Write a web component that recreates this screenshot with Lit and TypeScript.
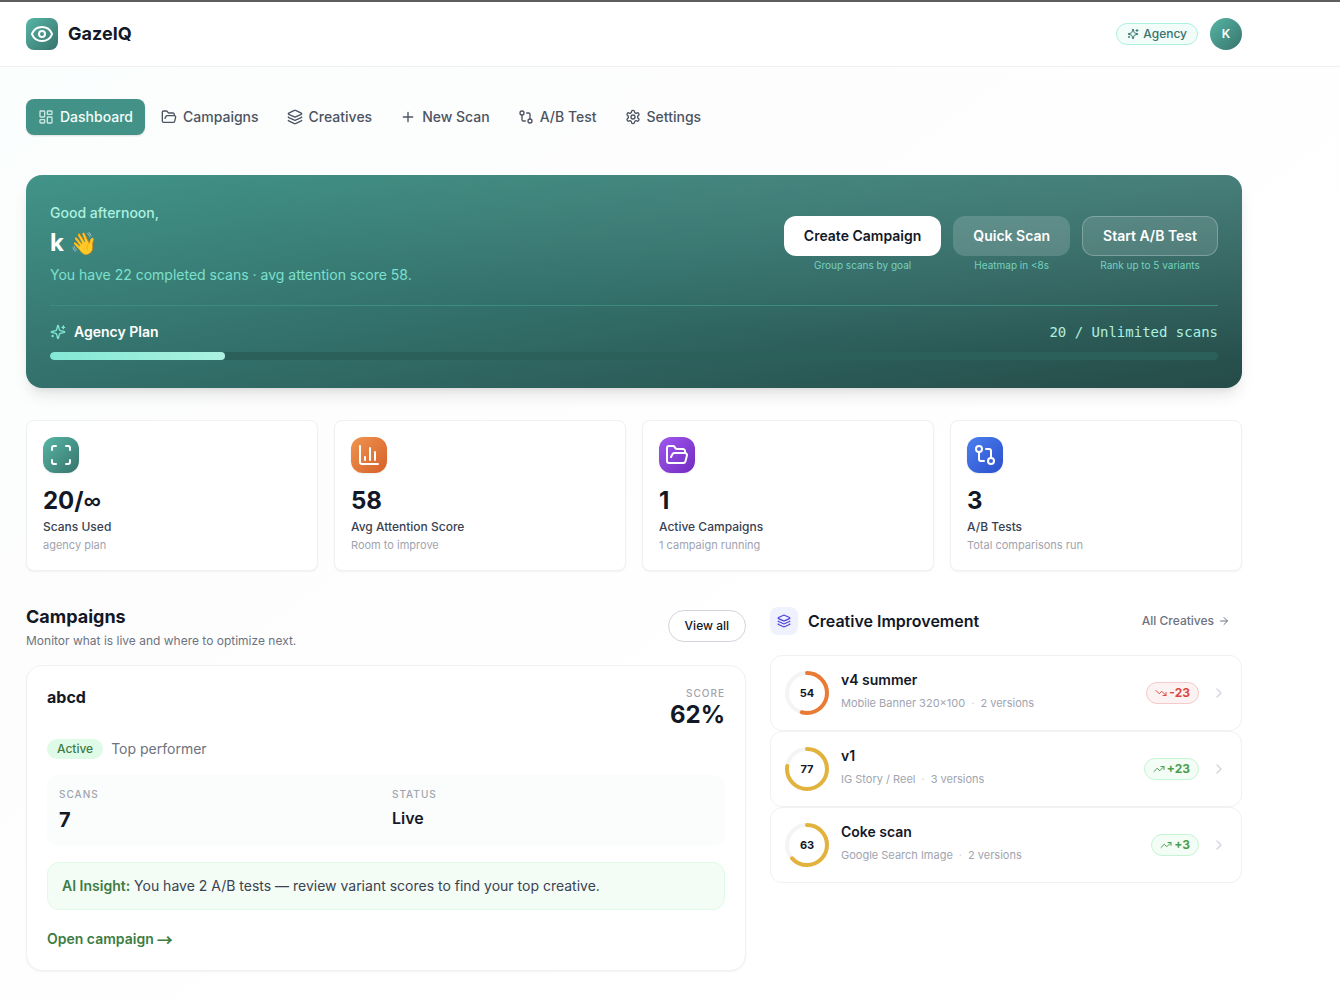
import { LitElement, html, svg, css, type SVGTemplateResult } from "lit";
import { customElement } from "lit/decorators.js";
import { styleMap } from "lit/directives/style-map.js";

const icons: Record<string, SVGTemplateResult> = {
  eye: svg`<path d="M2.062 12.348a1 1 0 0 1 0-.696 10.75 10.75 0 0 1 19.876 0 1 1 0 0 1 0 .696 10.75 10.75 0 0 1-19.876 0"/><circle cx="12" cy="12" r="3"/>`,
  dashboard: svg`<rect x="3" y="3" width="7" height="9" rx="1"/><rect x="14" y="3" width="7" height="5" rx="1"/><rect x="14" y="12" width="7" height="9" rx="1"/><rect x="3" y="16" width="7" height="5" rx="1"/>`,
  folder: svg`<path d="m6 14 1.5-2.9A2 2 0 0 1 9.24 10H20a2 2 0 0 1 1.94 2.5l-1.54 6a2 2 0 0 1-1.95 1.5H4a2 2 0 0 1-2-2V5a2 2 0 0 1 2-2h3.9a2 2 0 0 1 1.69.9l.81 1.2a2 2 0 0 0 1.67.9H18a2 2 0 0 1 2 2v2"/>`,
  layers: svg`<path d="M12.83 2.18a2 2 0 0 0-1.66 0L2.6 6.08a1 1 0 0 0 0 1.83l8.58 3.91a2 2 0 0 0 1.66 0l8.58-3.9a1 1 0 0 0 0-1.83z"/><path d="M2 12a1 1 0 0 0 .58.91l8.6 3.91a2 2 0 0 0 1.65 0l8.58-3.9A1 1 0 0 0 22 12"/><path d="M2 17a1 1 0 0 0 .58.91l8.6 3.91a2 2 0 0 0 1.65 0l8.58-3.9A1 1 0 0 0 22 17"/>`,
  plus: svg`<path d="M5 12h14M12 5v14"/>`,
  compare: svg`<circle cx="18" cy="18" r="3"/><circle cx="6" cy="6" r="3"/><path d="M13 6h3a2 2 0 0 1 2 2v7"/><path d="M11 18H8a2 2 0 0 1-2-2V9"/>`,
  settings: svg`<path d="M12.22 2h-.44a2 2 0 0 0-2 2v.18a2 2 0 0 1-1 1.73l-.43.25a2 2 0 0 1-2 0l-.15-.08a2 2 0 0 0-2.73.73l-.22.38a2 2 0 0 0 .73 2.73l.15.1a2 2 0 0 1 1 1.72v.51a2 2 0 0 1-1 1.74l-.15.09a2 2 0 0 0-.73 2.73l.22.38a2 2 0 0 0 2.73.73l.15-.08a2 2 0 0 1 2 0l.43.25a2 2 0 0 1 1 1.73V20a2 2 0 0 0 2 2h.44a2 2 0 0 0 2-2v-.18a2 2 0 0 1 1-1.73l.43-.25a2 2 0 0 1 2 0l.15.08a2 2 0 0 0 2.73-.73l.22-.39a2 2 0 0 0-.73-2.73l-.15-.08a2 2 0 0 1-1-1.74v-.5a2 2 0 0 1 1-1.74l.15-.09a2 2 0 0 0 .73-2.73l-.22-.38a2 2 0 0 0-2.73-.73l-.15.08a2 2 0 0 1-2 0l-.43-.25a2 2 0 0 1-1-1.73V4a2 2 0 0 0-2-2z"/><circle cx="12" cy="12" r="3"/>`,
  sparkles: svg`<path d="M9.937 15.5A2 2 0 0 0 8.5 14.063l-6.135-1.582a.5.5 0 0 1 0-.962L8.5 9.936A2 2 0 0 0 9.937 8.5l1.582-6.135a.5.5 0 0 1 .963 0L14.063 8.5A2 2 0 0 0 15.5 9.937l6.135 1.581a.5.5 0 0 1 0 .964L15.5 14.063a2 2 0 0 0-1.437 1.437l-1.582 6.135a.5.5 0 0 1-.963 0z"/><path d="M20 3v4M22 5h-4M4 17v2M5 18H3"/>`,
  scan: svg`<path d="M3 7V5a2 2 0 0 1 2-2h2M17 3h2a2 2 0 0 1 2 2v2M21 17v2a2 2 0 0 1-2 2h-2M7 21H5a2 2 0 0 1-2-2v-2"/>`,
  chart: svg`<path d="M3 3v16a2 2 0 0 0 2 2h16M18 17V9M13 17V5M8 17v-3"/>`,
  down: svg`<path d="m22 17-8.5-8.5-5 5L2 7"/><path d="M16 17h6v-6"/>`,
  up: svg`<path d="m22 7-8.5 8.5-5-5L2 17"/><path d="M16 7h6v6"/>`,
  arrow: svg`<path d="M5 12h14M12 5l7 7-7 7"/>`,
  chevron: svg`<path d="m9 18 6-6-6-6"/>`,
};

const icon = (name: string, size = 16) => html`<svg
  class="icon"
  width=${size}
  height=${size}
  viewBox="0 0 24 24"
  aria-hidden="true"
>${icons[name]}</svg>`;

const navItems = [
  { label: "Dashboard", icon: "dashboard", active: true },
  { label: "Campaigns", icon: "folder" },
  { label: "Creatives", icon: "layers" },
  { label: "New Scan", icon: "plus" },
  { label: "A/B Test", icon: "compare" },
  { label: "Settings", icon: "settings" },
];

const actions = [
  { label: "Create Campaign", hint: "Group scans by goal", kind: "solid" },
  { label: "Quick Scan", hint: "Heatmap in <8s", kind: "soft" },
  { label: "Start A/B Test", hint: "Rank up to 5 variants", kind: "outline" },
];

const stats = [
  {
    icon: "scan",
    tone: "teal",
    value: html`20/<span class="infinity">∞</span>`,
    label: "Scans Used",
    note: "agency plan",
  },
  { icon: "chart", tone: "orange", value: "58", label: "Avg Attention Score", note: "Room to improve" },
  { icon: "folder", tone: "purple", value: "1", label: "Active Campaigns", note: "1 campaign running" },
  { icon: "compare", tone: "blue", value: "3", label: "A/B Tests", note: "Total comparisons run" },
];

const creatives = [
  { name: "v4 summer", format: "Mobile Banner 320×100", versions: 2, score: 54, delta: -23 },
  { name: "v1", format: "IG Story / Reel", versions: 3, score: 77, delta: 23 },
  { name: "Coke scan", format: "Google Search Image", versions: 2, score: 63, delta: 3 },
];

@customElement("app-root")
export class AppRoot extends LitElement {
  static styles = css`
    :host {
      display: block;
      min-height: 100vh;
      box-sizing: border-box;
      border-top: 2px solid #5f5d5e;
      background: linear-gradient(to bottom right, #fafefd, #fdfdfd 30%, #ffffff 70%);
      color: #131827;
      font-family: Inter, "Liberation Sans", sans-serif;
      font-size: 14px;
      line-height: 20px;
    }
    *,
    *::before,
    *::after {
      box-sizing: border-box;
    }
    h1, h2, h3, p, ul {
      margin: 0;
      padding: 0;
      list-style: none;
    }
    a {
      color: inherit;
      text-decoration: none;
    }
    button {
      font: inherit;
      color: inherit;
      cursor: pointer;
      margin: 0;
    }
    .icon {
      display: block;
      flex: none;
      fill: none;
      stroke: currentColor;
      stroke-width: 2;
      stroke-linecap: round;
      stroke-linejoin: round;
    }

    .topbar {
      display: flex;
      align-items: center;
      justify-content: space-between;
      height: 65px;
      padding: 0 98px 0 26px;
      background: #ffffff;
      border-bottom: 1px solid #eef0f2;
    }
    .brand {
      display: flex;
      align-items: center;
      gap: 10px;
      font-size: 18px;
      font-weight: 700;
      line-height: 28px;
    }
    .brand-mark {
      display: grid;
      place-items: center;
      width: 32px;
      height: 32px;
      border-radius: 8px;
      color: #ffffff;
      background: linear-gradient(to bottom right, #57b6a5, #37736d);
    }
    .account {
      display: flex;
      align-items: center;
      gap: 12px;
    }
    .plan-pill {
      display: flex;
      align-items: center;
      gap: 4px;
      height: 22px;
      padding: 0 10px;
      border: 1px solid #acf1e0;
      border-radius: 11px;
      background: #f2fdfa;
      color: #37736d;
      font-size: 12px;
      font-weight: 500;
      line-height: 16px;
    }
    .avatar {
      width: 32px;
      height: 32px;
      padding: 0;
      border: 0;
      border-radius: 50%;
      background: linear-gradient(to bottom right, #57b6a5, #37736d);
      color: #ffffff;
      font-size: 12px;
      font-weight: 600;
    }

    .page {
      padding: 32px 98px 28px 26px;
    }
    .nav {
      display: flex;
      gap: 4px;
      margin-bottom: 40px;
    }
    .nav-link {
      display: flex;
      align-items: center;
      gap: 6px;
      height: 36px;
      padding: 0 12px;
      border-radius: 8px;
      color: #4c5462;
      font-weight: 500;
    }
    .nav-link.active {
      background: #429287;
      color: #f2fdfa;
      box-shadow: 0 1px 2px rgba(0, 0, 0, 0.12);
    }
    .nav-link.active .icon {
      opacity: 0.8;
    }

    .hero {
      padding: 28px 24px;
      margin-bottom: 32px;
      border-radius: 16px;
      color: #ffffff;
      background:
        radial-gradient(at top right, rgba(255, 255, 255, 0.1), rgba(255, 255, 255, 0) 60%),
        linear-gradient(to bottom right, #429488, #33706b 50%, #254b48);
      box-shadow: 0 10px 15px -3px rgba(0, 0, 0, 0.1), 0 4px 6px -4px rgba(0, 0, 0, 0.1);
    }
    .hero-main {
      display: flex;
      align-items: center;
      justify-content: space-between;
      gap: 24px;
      padding-bottom: 20px;
      border-bottom: 1px solid #3d8c82;
    }
    .hello {
      color: #acf1e0;
      font-weight: 500;
    }
    .user {
      margin: 4px 0 6px;
      font-size: 24px;
      font-weight: 700;
      line-height: 32px;
    }
    .wave {
      font-size: 22px;
      line-height: 24px;
    }
    .summary {
      color: #7de0ce;
    }
    .actions {
      display: flex;
      gap: 12px;
    }
    .action {
      display: flex;
      flex-direction: column;
      align-items: center;
      gap: 2px;
    }
    .action-button {
      height: 40px;
      padding: 0 20px;
      border: 0;
      border-radius: 12px;
      font-weight: 600;
    }
    .action-button.solid {
      background: #ffffff;
      color: #131827;
    }
    .action-button.soft {
      background: rgba(255, 255, 255, 0.16);
    }
    .action-button.outline {
      border: 1px solid rgba(255, 255, 255, 0.25);
      background: rgba(255, 255, 255, 0.12);
    }
    .hint {
      color: #74d2c0;
      font-size: 10px;
      line-height: 15px;
    }
    .quota {
      display: flex;
      justify-content: space-between;
      padding: 16px 0 10px;
    }
    .quota-plan {
      display: flex;
      align-items: center;
      gap: 8px;
      font-weight: 600;
    }
    .quota-plan .icon {
      color: #82e8d5;
    }
    .quota-count {
      color: #acf1e0;
      font-family: "DejaVu Sans Mono", monospace;
    }
    .meter {
      height: 8px;
      border-radius: 4px;
      background: #2b5f5a;
      overflow: hidden;
    }
    .meter-fill {
      height: 100%;
      border-radius: 4px;
      background: linear-gradient(to right, #82e8d5, #acf1e0);
    }

    .stats {
      display: grid;
      grid-template-columns: repeat(4, 1fr);
      gap: 16px;
      margin-bottom: 32px;
    }
    .stat {
      padding: 16px;
      border: 1px solid #eff1f3;
      border-radius: 8px;
      background: #ffffff;
      box-shadow: 0 1px 2px rgba(0, 0, 0, 0.05);
    }
    .stat-icon {
      display: grid;
      place-items: center;
      width: 36px;
      height: 36px;
      margin-bottom: 12px;
      border-radius: 12px;
      color: #ffffff;
      box-shadow: 0 1px 2px rgba(0, 0, 0, 0.08);
    }
    .teal { background: linear-gradient(to bottom right, #57b6a5, #37736d); }
    .orange { background: linear-gradient(to bottom right, #ef964f, #d65f29); }
    .purple { background: linear-gradient(to bottom right, #a059ee, #7129c0); }
    .blue { background: linear-gradient(to bottom right, #4c80ee, #2b4fcd); }
    .stat-value {
      font-size: 24px;
      font-weight: 700;
      line-height: 32px;
    }
    .infinity {
      font-family: "Liberation Sans", sans-serif;
    }
    .stat-label {
      margin: 2px 0;
      color: #3a4252;
      font-size: 12px;
      font-weight: 500;
      line-height: 16px;
    }
    .stat-note {
      color: #9fa4af;
      font-size: 11px;
      line-height: 17px;
    }

    .columns {
      display: grid;
      grid-template-columns: repeat(5, 1fr);
      gap: 24px;
      align-items: start;
    }
    .campaigns {
      grid-column: span 3;
    }
    .creatives {
      grid-column: span 2;
    }
    .section-head {
      display: flex;
      align-items: center;
      justify-content: space-between;
      margin-bottom: 16px;
    }
    .section-title {
      font-size: 18px;
      font-weight: 700;
      line-height: 28px;
    }
    .section-note {
      margin-top: 2px;
      color: #6d7380;
      font-size: 12px;
      line-height: 16px;
    }
    .view-all {
      height: 32px;
      padding: 0 16px;
      border: 1px solid #d2d5dc;
      border-radius: 16px;
      background: #ffffff;
      font-size: 12px;
      font-weight: 500;
    }
    .campaign {
      padding: 20px;
      border: 1px solid #eff1f3;
      border-radius: 16px;
      background: #ffffff;
      box-shadow: 0 1px 2px rgba(0, 0, 0, 0.05);
    }
    .campaign-head {
      display: flex;
      justify-content: space-between;
      margin-bottom: 10px;
    }
    .campaign-name {
      font-size: 16px;
      font-weight: 700;
      line-height: 22px;
    }
    .campaign-score {
      text-align: right;
    }
    .caption {
      color: #9fa4af;
      font-size: 10px;
      font-weight: 500;
      line-height: 15px;
      letter-spacing: 1px;
      text-transform: uppercase;
    }
    .score-value {
      font-size: 24px;
      font-weight: 700;
      line-height: 28px;
    }
    .tags {
      display: flex;
      align-items: center;
      gap: 8px;
      margin-bottom: 16px;
      color: #6d7380;
    }
    .tag {
      padding: 2px 10px;
      border-radius: 10px;
      background: #e0fae8;
      color: #3d7c43;
      font-size: 12px;
      font-weight: 500;
      line-height: 16px;
    }
    .facts {
      display: grid;
      grid-template-columns: 1fr 1fr;
      gap: 12px;
      padding: 12px;
      border-radius: 12px;
      background: #fafdfc;
    }
    .fact-number,
    .fact-text {
      margin-top: 4px;
      font-size: 20px;
      font-weight: 700;
      line-height: 28px;
    }
    .fact-text {
      font-size: 16px;
      font-weight: 600;
      line-height: 24px;
    }
    .insight {
      margin: 16px 0 18px;
      padding: 12px 14px;
      border: 1px solid #e0fae8;
      border-radius: 12px;
      background: #f3fdf6;
      color: #3a4252;
      line-height: 22px;
    }
    .insight-label {
      color: #3d7c43;
      font-weight: 600;
    }
    .open-link {
      display: flex;
      align-items: center;
      gap: 3px;
      color: #3d7c43;
      font-weight: 600;
      line-height: 22px;
    }
    .long-arrow {
      font-family: "Noto Sans CJK SC", sans-serif;
      font-size: 16px;
    }

    .creatives .section-head {
      height: 36px;
    }
    .creatives-title {
      display: flex;
      align-items: center;
      gap: 10px;
      font-size: 16px;
      font-weight: 600;
      line-height: 24px;
    }
    .title-icon {
      display: grid;
      place-items: center;
      width: 28px;
      height: 28px;
      border-radius: 8px;
      background: #eff1fe;
      color: #4c41dc;
    }
    .all-link {
      display: flex;
      align-items: center;
      gap: 4px;
      padding: 0 12px;
      color: #6d7380;
      font-size: 12px;
      font-weight: 500;
    }
    .creative {
      display: flex;
      align-items: center;
      gap: 12px;
      padding: 14px;
      border: 1px solid #eff1f3;
      border-radius: 12px;
      background: #ffffff;
    }
    .ring {
      display: block;
      flex: none;
    }
    .ring-track,
    .ring-value {
      fill: none;
      stroke-width: 4;
    }
    .ring-track {
      stroke: #f3f4f6;
    }
    .ring-value {
      stroke: #e2b33c;
      stroke-linecap: round;
    }
    .ring-value.low {
      stroke: #ea7b35;
    }
    .ring-text {
      fill: #131827;
      font-size: 11px;
      font-weight: 700;
      text-anchor: middle;
    }
    .creative-info {
      flex: 1;
      min-width: 0;
    }
    .creative-name {
      font-size: 14px;
      font-weight: 600;
      line-height: 20px;
    }
    .creative-meta {
      display: flex;
      gap: 6px;
      color: #9fa4af;
      font-size: 11px;
      line-height: 26px;
    }
    .dot {
      color: #d2d5dc;
    }
    .delta {
      display: flex;
      align-items: center;
      gap: 2px;
      height: 22px;
      padding: 0 8px;
      border: 1px solid #c5f5d3;
      border-radius: 11px;
      background: #f3fdf6;
      color: #4b9d50;
      font-size: 12px;
      font-weight: 700;
      line-height: 16px;
    }
    .delta.negative {
      border-color: #f5caca;
      background: #fcf2f2;
      color: #d94842;
    }
    .go {
      color: #d2d5dc;
    }
  `;

  private renderRing(score: number) {
    const length = 2 * Math.PI * 20;
    return html`<svg class="ring" width="44" height="44" viewBox="0 0 44 44" role="img" aria-label="Score ${score}">
      <circle class="ring-track" cx="22" cy="22" r="20" />
      <circle
        class="ring-value ${score < 60 ? "low" : ""}"
        cx="22"
        cy="22"
        r="20"
        transform="rotate(-90 22 22)"
        stroke-dasharray="${(length * score) / 100} ${length}"
      />
      <text class="ring-text" x="22" y="26">${score}</text>
    </svg>`;
  }

  render() {
    return html`
      <header class="topbar">
        <a class="brand" href="#"><span class="brand-mark">${icon("eye", 24)}</span>GazeIQ</a>
        <div class="account">
          <span class="plan-pill">${icon("sparkles", 12)}Agency</span>
          <button class="avatar" type="button">K</button>
        </div>
      </header>

      <main class="page">
        <nav class="nav">
          ${navItems.map(
            (item) => html`<a class="nav-link ${item.active ? "active" : ""}" href="#">${icon(item.icon)}${item.label}</a>`
          )}
        </nav>

        <section class="hero">
          <div class="hero-main">
            <div>
              <p class="hello">Good afternoon,</p>
              <h1 class="user">k <span class="wave">👋</span></h1>
              <p class="summary">You have 22 completed scans · avg attention score 58.</p>
            </div>
            <div class="actions">
              ${actions.map(
                (a) => html`<div class="action">
                  <button class="action-button ${a.kind}" type="button">${a.label}</button>
                  <span class="hint">${a.hint}</span>
                </div>`
              )}
            </div>
          </div>
          <div class="quota">
            <span class="quota-plan">${icon("sparkles")}Agency Plan</span>
            <span class="quota-count">20 / Unlimited scans</span>
          </div>
          <div class="meter"><div class="meter-fill" style=${styleMap({ width: "15%" })}></div></div>
        </section>

        <section class="stats">
          ${stats.map(
            (s) => html`<article class="stat">
              <div class="stat-icon ${s.tone}">${icon(s.icon, 24)}</div>
              <p class="stat-value">${s.value}</p>
              <p class="stat-label">${s.label}</p>
              <p class="stat-note">${s.note}</p>
            </article>`
          )}
        </section>

        <div class="columns">
          <section class="campaigns">
            <div class="section-head">
              <div>
                <h2 class="section-title">Campaigns</h2>
                <p class="section-note">Monitor what is live and where to optimize next.</p>
              </div>
              <button class="view-all" type="button">View all</button>
            </div>
            <article class="campaign">
              <div class="campaign-head">
                <h3 class="campaign-name">abcd</h3>
                <div class="campaign-score">
                  <p class="caption">Score</p>
                  <p class="score-value">62%</p>
                </div>
              </div>
              <div class="tags"><span class="tag">Active</span>Top performer</div>
              <div class="facts">
                <div>
                  <p class="caption">Scans</p>
                  <p class="fact-number">7</p>
                </div>
                <div>
                  <p class="caption">Status</p>
                  <p class="fact-text">Live</p>
                </div>
              </div>
              <p class="insight">
                <span class="insight-label">AI Insight:</span> You have 2 A/B tests — review variant scores to find your top creative.
              </p>
              <a class="open-link" href="#">Open campaign <span class="long-arrow">→</span></a>
            </article>
          </section>

          <section class="creatives">
            <div class="section-head">
              <h2 class="creatives-title"><span class="title-icon">${icon("layers", 14)}</span>Creative Improvement</h2>
              <a class="all-link" href="#">All Creatives ${icon("arrow", 12)}</a>
            </div>
            <ul>
              ${creatives.map(
                (c) => html`<li>
                  <a class="creative" href="#">
                    ${this.renderRing(c.score)}
                    <div class="creative-info">
                      <h3 class="creative-name">${c.name}</h3>
                      <p class="creative-meta">
                        <span>${c.format}</span><span class="dot">·</span><span>${c.versions} versions</span>
                      </p>
                    </div>
                    <span class="delta ${c.delta < 0 ? "negative" : ""}"
                      >${icon(c.delta < 0 ? "down" : "up", 12)}${c.delta > 0 ? "+" : ""}${c.delta}</span
                    >
                    <span class="go">${icon("chevron")}</span>
                  </a>
                </li>`
              )}
            </ul>
          </section>
        </div>
      </main>
    `;
  }
}
